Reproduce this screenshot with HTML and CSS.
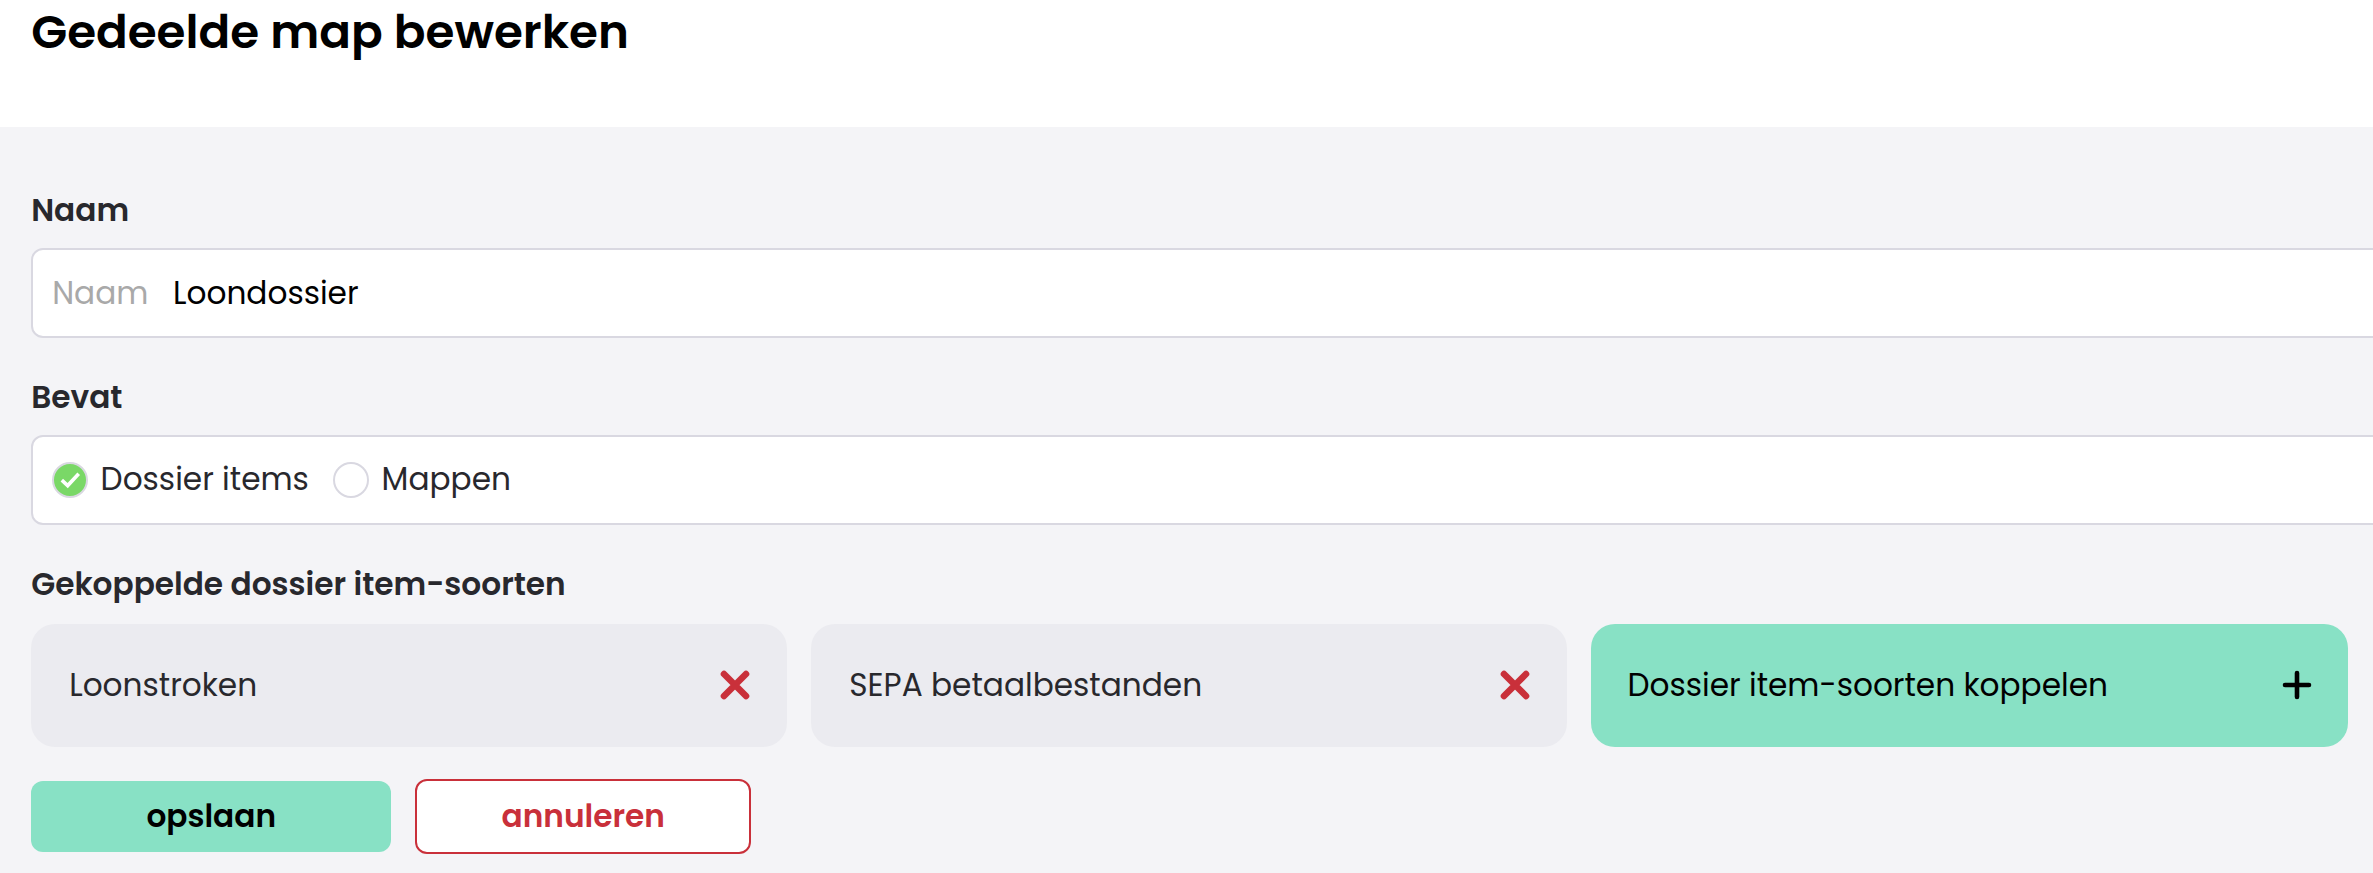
FILE: index.html
```
<!DOCTYPE html>
<html lang="nl">
<head>
<meta charset="utf-8">
<title>Gedeelde map bewerken</title>
<link rel="stylesheet" href="styles.css">
</head>
<body>
<header class="header"><h1 class="title">Gedeelde map bewerken</h1></header>
<main class="form">
  <label class="label">Naam</label>
  <div class="field">
    <span class="prefix">Naam</span><span class="value">Loondossier</span>
  </div>
  <label class="label label-contains">Bevat</label>
  <div class="field">
    <span class="radio radio-on"><svg viewBox="0 0 36 36" width="36" height="36"><path d="M9.8 18.2l5.9 5.4L26.7 11.8" fill="none" stroke="#fff" stroke-width="3.6"/></svg></span>
    <span class="option option-items">Dossier items</span>
    <span class="radio"></span>
    <span class="option">Mappen</span>
  </div>
  <label class="label label-types">Gekoppelde dossier item-soorten</label>
  <div class="cards">
    <div class="card"><span>Loonstroken</span><svg class="icon" viewBox="0 0 30 30"><path d="M4 4L26 26M26 4L4 26" fill="none" stroke="#c9303a" stroke-width="6.6" stroke-linecap="round"/></svg></div>
    <div class="card"><span>SEPA betaalbestanden</span><svg class="icon" viewBox="0 0 30 30"><path d="M4 4L26 26M26 4L4 26" fill="none" stroke="#c9303a" stroke-width="6.6" stroke-linecap="round"/></svg></div>
    <div class="card card-add"><span>Dossier item-soorten koppelen</span><svg class="icon" viewBox="0 0 30 30"><path d="M3 15H27M15 3V27" fill="none" stroke="#000" stroke-width="4.6" stroke-linecap="round"/></svg></div>
  </div>
  <div class="actions">
    <button class="button save">opslaan</button>
    <button class="button cancel">annuleren</button>
  </div>
</main>
</body>
</html>
```
FILE: styles.css
```
* { box-sizing: border-box; }
body {
  margin: 0;
  height: 873px;
  overflow: hidden;
  background: #f4f4f7;
  color: #28282d;
  font-family: Poppins, Inter, "Liberation Sans", sans-serif;
  font-size: 31.2px;
  line-height: 48px;
}
.header { height: 127px; background: #fff; padding-left: 31.2px; }
.title { margin: 0; color: #000; font-size: 46.8px; line-height: 63px; font-weight: 600; }
.form { padding: 59px 0 0 31.2px; }
.label { display: block; height: 62px; font-weight: 600; }
.label-contains, .label-types { height: 97px; padding-top: 35px; }
.label-types { height: 99px; }
.field {
  display: flex;
  align-items: center;
  width: 2400px;
  height: 90px;
  padding: 0 19px;
  border: 2px solid #d9d8e1;
  border-radius: 12px;
  background: #fff;
}
.prefix { width: 120.8px; color: #a9a9a9; }
.value { color: #000; }
.radio { width: 36px; height: 36px; flex: none; border: 2px solid #d9d8e1; border-radius: 50%; background: #fff; }
.radio-on { background: #7ad867; }
.radio-on svg { display: block; margin: -2px; }
.option { margin-left: 12.4px; padding-bottom: 2px; }
.option-items { width: 232.6px; }
.cards { display: grid; grid-template-columns: repeat(3, 1fr); gap: 24px; width: 2316.4px; }
.card {
  display: flex;
  align-items: center;
  justify-content: space-between;
  height: 123px;
  padding: 0 37.5px 2px 38px;
  border-radius: 24px;
  background: #ebebf0;
}
.card-add { background: #88e1c5; color: #000; padding: 0 35.5px 2px 36px; }
.icon { width: 30px; height: 30px; }
.actions { display: flex; align-items: center; gap: 24px; margin-top: 32px; }
.button {
  border: 0;
  padding: 0 0 2px;
  border-radius: 12px;
  font-family: inherit;
  font-size: 31.2px;
  line-height: 48px;
  font-weight: 600;
}
.save { width: 360px; height: 71px; background: #88e1c5; color: #000; }
.cancel { width: 336px; height: 75px; border: 2px solid #c9303a; background: #fff; color: #c9303a; }
```
